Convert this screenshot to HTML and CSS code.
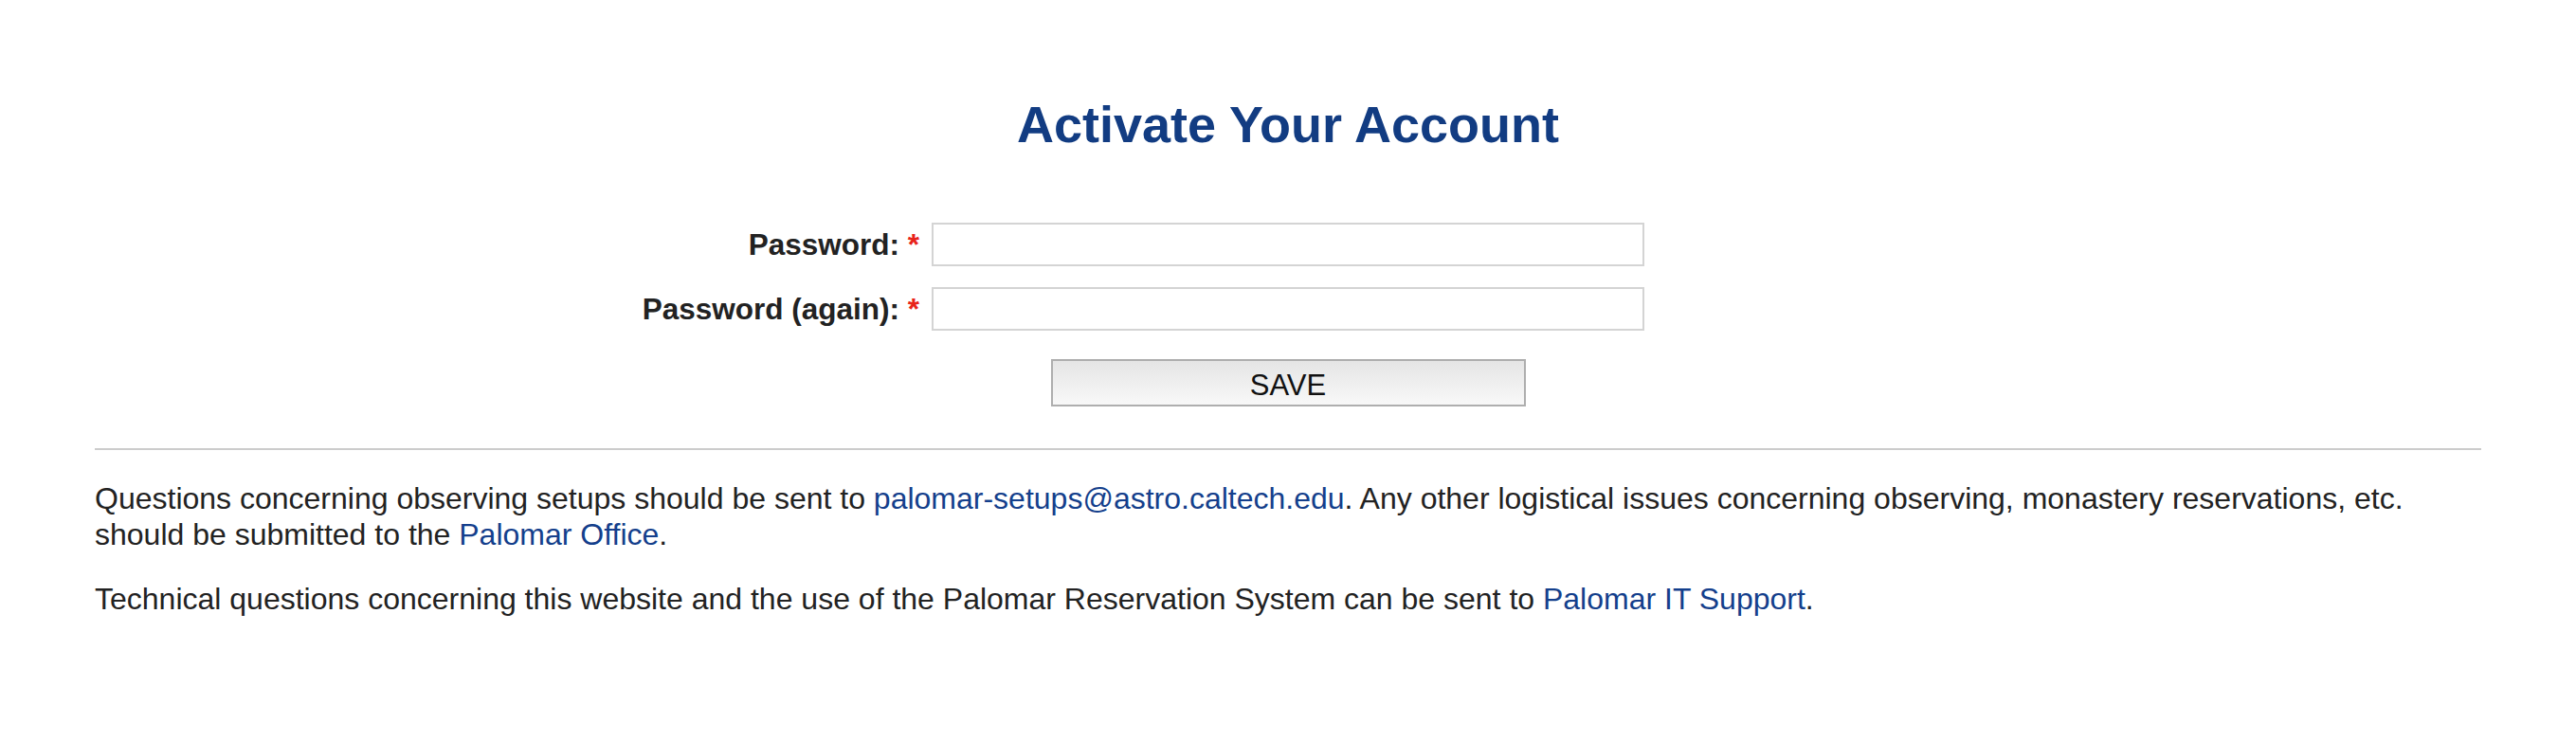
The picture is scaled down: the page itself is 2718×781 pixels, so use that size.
FILE: index.html
```html
<!DOCTYPE html>
<html lang="en">
<head>
  <meta charset="UTF-8">
  <title>Activate Your Account</title>
  <link rel="stylesheet" href="styles.css">
</head>
<body>
  <div class="page">
    <h1>Activate Your Account</h1>

    <form id="activateForm" class="activate-form">
      <label class="field-label" for="password1">Password: <span class="required">*</span></label>
      <input class="field-input" type="password" id="password1" name="password1">

      <label class="field-label" for="password2">Password (again): <span class="required">*</span></label>
      <input class="field-input" type="password" id="password2" name="password2">

      <button class="save-button" type="submit">SAVE</button>
    </form>

    <hr class="divider">

    <p>Questions concerning observing setups should be sent to <a href="#">palomar-setups@astro.caltech.edu</a>. Any other logistical issues concerning observing, monastery reservations, etc. should be submitted to the <a href="#">Palomar Office</a>.</p>

    <p>Technical questions concerning this website and the use of the Palomar Reservation System can be sent to <a href="#">Palomar IT Support</a>.</p>
  </div>
</body>
</html>
```

FILE: styles.css
```css
body {
  margin: 0;
  background-color: #ffffff;
  color: #222222;
  font-family: 'Liberation Sans', Arial, Helvetica, sans-serif;
}

.page {
  padding: 100px 100px 40px;
}

h1 {
  margin: 0 0 73px;
  text-align: center;
  font-size: 54px;
  font-weight: bold;
  color: #123c82;
}

.activate-form {
  display: grid;
  grid-template-columns: 1fr 752px 1fr;
  row-gap: 22px;
  align-items: center;
}

.field-label {
  grid-column: 1;
  justify-self: end;
  padding-right: 13px;
  font-size: 31.5px;
  font-weight: bold;
  color: #222222;
}

.required {
  color: #e8231b;
}

.field-input {
  grid-column: 2;
  box-sizing: border-box;
  width: 752px;
  height: 46px;
  margin: 0;
  padding: 4px 8px;
  border: 2px solid #d4d4d4;
  font-size: 30px;
  font-family: inherit;
}

.save-button {
  grid-column: 2;
  justify-self: center;
  box-sizing: border-box;
  width: 501px;
  height: 50px;
  margin-top: 8px;
  padding: 5px 0 0;
  border: 2px solid #aeaeae;
  background: linear-gradient(#e5e5e5, #f8f8f8);
  color: #111111;
  font-family: inherit;
  font-size: 31px;
  cursor: pointer;
}

.divider {
  margin: 44px 0 32px;
  border: none;
  border-top: 2px solid #cccccc;
}

p {
  margin: 0 0 30px;
  font-size: 32px;
  line-height: 38px;
}

a {
  color: #143f8c;
  text-decoration: none;
}
```
